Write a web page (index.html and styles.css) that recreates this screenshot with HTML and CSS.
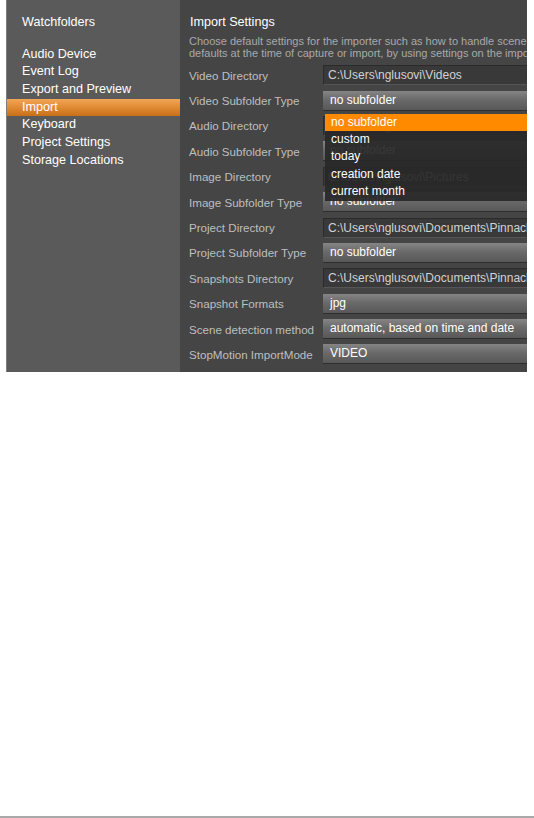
FILE: index.html
```html
<!DOCTYPE html>
<html>
  <head>
    <link rel="stylesheet" href="styles.css">
  </head>
  <body>
    <div class="page">
      <div class="window">
        <nav class="sidebar">
          <div class="nav-item nav-top">Watchfolders</div>
          <div class="nav-item">Audio Device</div>
          <div class="nav-item">Event Log</div>
          <div class="nav-item">Export and Preview</div>
          <div class="nav-item active">Import</div>
          <div class="nav-item">Keyboard</div>
          <div class="nav-item">Project Settings</div>
          <div class="nav-item">Storage Locations</div>
        </nav>

        <main class="content">
          <h1 class="title">Import Settings</h1>
          <p class="desc">
            Choose default settings for the importer such as how to handle scene detection and where files are stored. You can override these<br>
            defaults at the time of capture or import, by using settings on the importer.
          </p>

          <div class="form">
            <div class="label">Video Directory</div>
            <div class="field text">C:\Users\nglusovi\Videos</div>

            <div class="label">Video Subfolder Type</div>
            <div class="field-wrap">
              <div class="field select">no subfolder</div>
              <!-- open dropdown -->
              <ul class="dropdown">
                <li class="selected">no subfolder</li>
                <li>custom</li>
                <li>today</li>
                <li>creation date</li>
                <li>current month</li>
              </ul>
            </div>

            <div class="label">Audio Directory</div>
            <div class="field text">C:\Users\nglusovi\Music</div>

            <div class="label">Audio Subfolder Type</div>
            <div class="field select">no subfolder</div>

            <div class="label">Image Directory</div>
            <div class="field text">C:\Users\nglusovi\Pictures</div>

            <div class="label">Image Subfolder Type</div>
            <div class="field select">no subfolder</div>

            <div class="label">Project Directory</div>
            <div class="field text">C:\Users\nglusovi\Documents\Pinnacle Studio\Projects</div>

            <div class="label">Project Subfolder Type</div>
            <div class="field select">no subfolder</div>

            <div class="label">Snapshots Directory</div>
            <div class="field text">C:\Users\nglusovi\Documents\Pinnacle Studio\Snapshots</div>

            <div class="label">Snapshot Formats</div>
            <div class="field select">jpg</div>

            <div class="label">Scene detection method</div>
            <div class="field select">automatic, based on time and date</div>

            <div class="label">StopMotion ImportMode</div>
            <div class="field select">VIDEO</div>
          </div>
        </main>
      </div>

      <div class="rule"></div>
    </div>
  </body>
</html>
```

FILE: styles.css
```css
body {
  margin: 0;
  background: #fff;
  font-family: "Liberation Sans", Arial, sans-serif;
}

.page {
  display: flex;
  flex-direction: column;
  height: 818px;
}

.window {
  display: flex;
  width: 520px;
  height: 372px;
  margin-left: 6px;
  border-left: 1px solid #7e7e7e;
  overflow: hidden;
}

/* Left navigation */
.sidebar {
  width: 173px;
  flex-shrink: 0;
  background: #5a5a5a;
  padding-top: 13.5px;
  box-sizing: border-box;
}

.nav-item {
  color: #fff;
  font-size: 12.6px;
  line-height: 17.67px;
  padding-left: 15px;
  white-space: nowrap;
}

.nav-top {
  margin-bottom: 14.5px;
}

.nav-item.active {
  background: linear-gradient(180deg, #f2a656 0%, #e08a34 50%, #c96f18 100%);
}

/* Right panel */
.content {
  flex: 1;
  min-width: 0;
  background: #454545;
  padding: 14px 0 0 9px;
  overflow: hidden;
}

.title {
  margin: 0;
  color: #fff;
  font-size: 12.6px;
  font-weight: normal;
  line-height: 16px;
  padding-left: 1px;
}

.desc {
  margin: 5.8px 0 0;
  color: #a9a9a9;
  font-size: 11px;
  line-height: 11.7px;
  white-space: nowrap;
}

.form {
  display: grid;
  grid-template-columns: 134px 260px;
  grid-auto-rows: 25.4px;
  align-items: center;
  margin-top: 3.3px;
}

.label {
  color: #bfbfbf;
  font-size: 11.6px;
  white-space: nowrap;
}

.field {
  height: 20px;
  box-sizing: border-box;
  font-size: 12px;
  line-height: 18px;
  white-space: nowrap;
  overflow: hidden;
}

.field.text {
  background: #393939;
  border: 1px solid #2b2b2b;
  border-bottom-color: #555;
  color: #d2d2d2;
  padding-left: 4px;
}

.field.select {
  background: linear-gradient(180deg, #858585 0%, #6a6a6a 45%, #585858 100%);
  border-bottom: 1px solid #2e2e2e;
  color: #fff;
  padding-left: 7px;
  line-height: 19px;
}

.field-wrap {
  position: relative;
}

.dropdown {
  position: absolute;
  top: 23px;
  left: 2px;
  width: 260px;
  margin: 0;
  padding: 0;
  list-style: none;
  background: rgba(40, 40, 40, 0.93);
  z-index: 2;
}

.dropdown li {
  color: #fff;
  font-size: 12px;
  line-height: 17.4px;
  padding-left: 6px;
  white-space: nowrap;
}

.dropdown li.selected {
  background: #ff8a00;
}

.rule {
  margin-top: auto;
  margin-bottom: 0;
  height: 2px;
  background: #a9a9a9;
}
```
